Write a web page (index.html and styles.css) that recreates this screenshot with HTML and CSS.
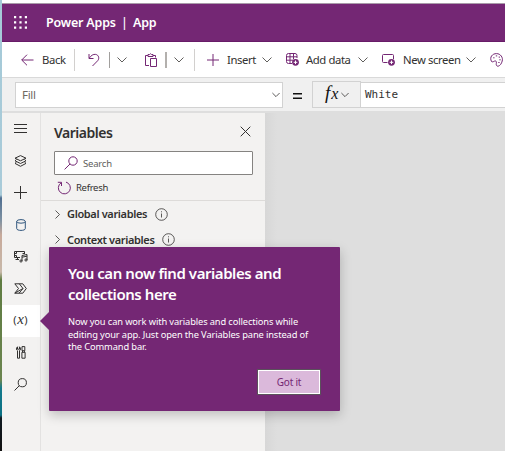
FILE: index.html
```html
<!DOCTYPE html>
<html lang="en">
<head>
<meta charset="utf-8">
<title>Power Apps | App</title>
<link rel="stylesheet" href="styles.css">
</head>
<body>
<svg class="defs" width="0" height="0">
  <symbol id="chev" viewBox="0 0 10 6"><path d="M.5 .5 5 5 9.5 .5"/></symbol>
  <symbol id="info" viewBox="0 0 13 13"><circle cx="6.5" cy="6.5" r="5.8"/><path d="M6.5 5.5v4M6.5 3.3v1"/></symbol>
</svg>
<div class="window">
  <header class="header">
    <svg class="waffle" width="13" height="13" viewBox="0 0 13 13"><path d="M0 1.2h13M0 6.4h13M0 11.6h13"/></svg>
    <span class="product">Power Apps</span><span class="bar">|</span><span class="appname">App</span>
  </header>

  <nav class="toolbar">
    <svg width="13" height="12" viewBox="0 0 13 12"><path d="M12.5 6H.8M6 .7.7 6 6 11.3"/></svg>
    <span class="t-back">Back</span>
    <i class="sep"></i>
    <svg width="12" height="14" viewBox="0 0 12 14"><path d="M1 1v4.500h4.500M1.200 5.200C3 2.500 5.200 1 7.700 1.400c3 .5 4 4 2 6.300L4.500 13"/></svg>
    <i class="sep dark"></i>
    <svg class="gray" width="10" height="6"><use href="#chev"/></svg>
    <svg width="12" height="14" viewBox="0 0 12 14"><path d="M4 12.500H.5V2.500H3M8 2.500h2.500v2M3 3.500v-2h1.500q1-1.500 2 0H8v2zM5.500 5.500h6v8h-6z"/></svg>
    <i class="sep thick"></i>
    <svg class="gray" width="10" height="6"><use href="#chev"/></svg>
    <i class="sep"></i>
    <svg width="12" height="12" viewBox="0 0 12 12"><path d="M6 0v12M0 6h12"/></svg>
    <span class="t-insert">Insert</span>
    <svg class="gray" width="10" height="6"><use href="#chev"/></svg>
    <svg width="13" height="13" viewBox="0 0 13 13"><path d="M6 10.500H2.500Q.5 10.500.5 8.500v-6Q.5.5 2.500.5h6.500q2 0 2 2V5M.5 3.800H11M.5 7.200H7M4 .5v10M7.500.5V6"/><circle class="dot" cx="9.500" cy="9.300" r="3.400"/><path class="light" d="M9.500 7.500v3.600M7.700 9.300h3.600"/></svg>
    <span class="t-data">Add data</span>
    <svg class="gray" width="10" height="6"><use href="#chev"/></svg>
    <svg width="13" height="13" viewBox="0 0 13 13"><path d="M5.500 9.500H1.500q-1 0-1-1v-6q0-1 1-1h9q1 0 1 1V6"/><circle class="dot" cx="9.500" cy="9.300" r="3.400"/><path class="light" d="M9.500 7.500v3.600M7.700 9.300h3.600"/></svg>
    <span class="t-screen">New screen</span>
    <svg class="gray" width="10" height="6"><use href="#chev"/></svg>
    <svg width="13" height="14" viewBox="0 0 13 14"><path d="M1.500 8.500C-.8 4 2.500.6 6.500.6s6.800 4 5.700 7.400c-.6 2.500-2.100 4.700-4 5.200-1.600.2-2.200-1.200-1.900-2.700.4-2-.3-3-1.800-2.400-1 .5-2.200 1.200-3 .4z"/><path d="M3.200 4.800h1.300M5.800 2.900h1.400M8.700 4.100H10M9.300 6.800h1.400M8.300 9.500h1.300"/></svg>
  </nav>

  <div class="formula">
    <div class="property"><span>Fill</span><svg class="ink" width="8" height="6"><use href="#chev"/></svg></div>
    <div class="equals"><svg width="9" height="6" viewBox="0 0 9 6"><path d="M0 .75h9M0 5.250h9"/></svg></div>
    <div class="fx"><span><b>f</b>x</span><svg class="ink" width="8" height="6"><use href="#chev"/></svg></div>
    <div class="value">White</div>
  </div>

  <main class="workspace">
    <aside class="rail">
      <div><svg width="13" height="9" viewBox="0 0 13 9"><path d="M0 .5h13M0 4.500h13M0 8.500h13"/></svg></div>
      <div><svg width="13" height="12" viewBox="0 0 13 12"><path d="M6.500.6 12 3.200 6.500 5.800 1 3.200zM2.500 4.500 1 5.800l5.500 2.700L12 5.800l-1.500-1.300M2.500 7 1 8.400l5.500 2.900L12 8.400 10.500 7"/></svg></div>
      <div><svg width="13" height="13" viewBox="0 0 13 13"><path d="M6.500 0v13M0 6.500h13"/></svg></div>
      <div><svg class="blue" width="10" height="12" viewBox="0 0 10 12"><ellipse cx="5" cy="2.400" rx="4.300" ry="1.800"/><path d="M.7 2.400v7.200c0 2.400 8.600 2.400 8.600 0V2.400"/></svg></div>
      <div><svg width="14" height="13" viewBox="0 0 14 13"><path d="M6 7.500H.5v-6h10v2.500M.5 3.500h2v-2M.5 5.500h2v2M8.500 3.500h2M3.500 9.500V7.500M1.500 9.500H5M8 11V5.500l5-1V10M8 7.200l5-1"/><circle cx="7" cy="11" r="1.100"/><circle cx="12" cy="10" r="1.100"/></svg></div>
      <div><svg width="13" height="11" viewBox="0 0 13 11"><path d="M.8.8h8L12.300 5.500 8.800 10.200h-8L4.500 5.500zM5.300.8 9 5.500.8 10.200M9 5.500 5 10.200"/></svg></div>
      <div class="active"><span class="paren">(</span><span class="var">x</span><span class="paren">)</span></div>
      <div><svg width="10" height="13" viewBox="0 0 10 13"><path d="M1.500.8C0 2 .2 4 1.500 4.700v7.500h2V4.700C4.800 4 4.900 2 3.500.8v2.400h-2zM6 .6h2.800v4.100H6zM6.500 4.700v1.600M8.400 4.700v1.600M5.900 6.300h3.200v5.900H5.900z"/></svg></div>
      <div><svg width="13" height="13" viewBox="0 0 13 13"><circle cx="8.300" cy="4.700" r="4.100"/><path d="M5.400 7.600.5 12.500"/></svg></div>
    </aside>

    <section class="panel">
      <div class="panel-head"><h2>Variables</h2><svg class="ink" width="11" height="11" viewBox="0 0 11 11"><path d="M.7.7l9.600 9.600M10.300.7.7 10.300"/></svg></div>
      <div class="search"><svg width="14" height="14" viewBox="0 0 14 14"><circle cx="9" cy="5" r="4.200"/><path d="M6 8 .6 13.400"/></svg><span>Search</span></div>
      <div class="refresh"><svg width="14" height="14" viewBox="0 0 14 14"><path d="M9 1.100A6 6 0 1 1 4 1.900M.8 1.300H4.500V5"/></svg><span>Refresh</span></div>
      <div class="group"><svg class="ink" width="5" height="9" viewBox="0 0 5 9"><path d="M.5.5l4 4-4 4"/></svg><span class="g1">Global variables</span><svg class="ink" width="13" height="13"><use href="#info"/></svg></div>
      <div class="group"><svg class="ink" width="5" height="9" viewBox="0 0 5 9"><path d="M.5.5l4 4-4 4"/></svg><span class="g2">Context variables</span><svg class="ink" width="13" height="13"><use href="#info"/></svg></div>
    </section>
    <section class="canvas"></section>
  </main>
</div>

<div class="callout">
  <h1>You can now find variables and<br>collections here</h1>
  <p>Now you can work with variables and collections while<br>editing your app. Just open the Variables pane instead of<br>the Command bar.</p>
  <button>Got it</button>
</div>
</body>
</html>
```

FILE: styles.css
```css
* { box-sizing: border-box; }
body {
  margin: 0;
  width: 505px;
  height: 451px;
  overflow: hidden;
  padding-left: 2px;
  font-family: "Noto Sans", "Open Sans", sans-serif;
  color: #323130;
  background: linear-gradient(#a5cad8 0, #a9cbd9 195px, #506f91 198px, #7e91a2 220px, #c8aa9b 235px, #c8b9aa 272px, #5f7c42 280px, #6b8550 380px, #147a8c 388px, #0b7184 415px, #101b22 418px, #111 451px);
}
svg { display: block; fill: none; stroke: #742774; stroke-width: 1; overflow: visible; flex: none; }
.defs { position: absolute; }
span { white-space: nowrap; }
.window { height: 451px; display: flex; flex-direction: column; background: #fff; }

.header {
  height: 39px;
  margin-top: 3px;
  border-top: 1px solid #a99aa9;
  border-bottom: 1px solid #681b68;
  background: #742774;
  color: #fff;
  display: flex;
  align-items: center;
  padding-left: 12px;
  font-size: 12.5px;
  font-weight: 600;
  flex: none;
}
.waffle { stroke: #fff; stroke-width: 2.2; stroke-dasharray: 2.2 3.2; margin-right: 19px; }
.product { width: 75px; letter-spacing: -.2px; }
.bar { width: 12px; font-weight: 500; }
.appname { letter-spacing: -.2px; }

.toolbar {
  height: 35px;
  flex: none;
  display: grid;
  align-items: center;
  grid-template-columns: 21px 32px 14px 21px 8px 28px 20px 9px 20px 13px 20px 35px 24px 20px 52px 24px 21px 63px 24px 14px;
  padding-left: 19px;
  font-size: 11.3px;
  letter-spacing: -.4px;
}
.sep { width: 1px; height: 22px; background: #d2d0ce; }
.sep.dark { background: #a19f9d; height: 16px; }
.sep.thick { width: 2px; background: #b3b0ad; height: 16px; }
.gray { stroke: #605e5c; }
.ink { stroke: #323130; }
.dot { fill: #742774; stroke: none; }
.light { stroke: #fff; }

.formula {
  height: 36px;
  flex: none;
  border-top: 1px solid #d9d9d9;
  border-bottom: 2px solid #dedede;
  background: #f0f0f0;
  display: flex;
  padding: 4px 0 3px 13px;
}
.property {
  width: 268px;
  height: 26px;
  border: 1px solid #d2d2d2;
  background: #fff;
  display: flex;
  align-items: center;
  justify-content: space-between;
  padding: 0 2px 0 6px;
  font-size: 11.5px;
}
.property span { color: #6f6860; margin-top: -2px; letter-spacing: -.3px; }
.equals { width: 29px; display: flex; align-items: center; justify-content: center; padding-top: 2px; }
.equals svg { stroke: #111; stroke-width: 1.5; }
.fx {
  width: 49px;
  height: 27px;
  margin-top: -1px;
  border: 1px solid #d2d2d2;
  display: flex;
  align-items: center;
  justify-content: space-between;
  padding: 0 11px 0 12px;
  font: italic 16px/20px "Liberation Serif", serif;
  color: #111;
}
.fx span { margin-top: -3px; }
.fx b { font-size: 19px; font-weight: 400; margin-right: 1px; }
.value {
  flex: 1;
  height: 26px;
  border: 1px solid #d2d2d2;
  border-left: 0;
  border-right: 0;
  background: #fff;
  padding-left: 4px;
  font: 11px/24px "DejaVu Sans Mono", monospace;
}

.workspace { flex: 1; display: flex; background: #dedede; min-height: 0; }
.rail { width: 39px; background: #f3f2f1; border-right: 1px solid #e3e2e1; }
.rail div { height: 32px; display: flex; align-items: center; justify-content: center; padding-right: 1px; }
.rail div:not(.active) { padding-bottom: 1px; }
.rail svg { stroke: #323130; }
.rail svg.blue { stroke: #31577e; }
.rail .active { background: #fff; font-size: 11px; line-height: 18px; padding-bottom: 2px; }
.rail .var { font: italic 15px/18px "Liberation Serif", serif; padding: 0 .5px 2px; }

.panel { width: 224px; background: #f3f2f1; }
.panel-head { height: 38px; padding: 0 14px 0 13px; display: flex; align-items: center; justify-content: space-between; }
.panel-head svg { margin-bottom: 1px; }
.panel-head h2 { margin: 0; font-size: 14px; font-weight: 600; letter-spacing: -.5px; }
.search {
  margin: 0 12px 0 13px;
  height: 24px;
  border: 1px solid #858381;
  border-radius: 1px;
  background: #fff;
  display: flex;
  align-items: center;
  gap: 5px;
  padding-left: 9px;
  font-size: 9.5px;
  letter-spacing: -.2px;
  color: #605e5c;
}
.refresh { height: 26px; border-bottom: 1px solid #dddbd9; display: flex; align-items: center; gap: 5px; padding-left: 16px; font-size: 9.5px; letter-spacing: -.3px; }
.group { height: 26px; display: flex; align-items: center; padding-left: 14px; font-size: 11px; font-weight: 600; letter-spacing: -.36px; }
.group + .group { height: 25px; }
.group .ink { stroke-width: .8; }
.group span { margin-top: -1px; }
.g1 { width: 88px; margin-left: 7px; }
.g2 { width: 95px; margin-left: 7px; }
.canvas { flex: 1; background: linear-gradient(90deg, #d7d7d7, #dedede 12px); }

.callout {
  position: absolute;
  left: 49px;
  top: 247px;
  width: 291px;
  height: 164px;
  padding: 16px 19px;
  background: #742774;
  color: #fff;
  border-radius: 1px;
  box-shadow: 0 4px 12px rgba(0, 0, 0, .22);
  display: flex;
  flex-direction: column;
}
.callout::before {
  content: "";
  position: absolute;
  left: -9px;
  top: 65px;
  border: solid transparent;
  border-width: 9px 9px 9px 0;
  border-right-color: #742774;
}
.callout h1 { margin: 0; font-size: 15px; line-height: 21px; font-weight: 600; letter-spacing: -.44px; white-space: nowrap; }
.callout p { margin: 11px 0 0; font-size: 9.3px; line-height: 12.700px; letter-spacing: -.12px; white-space: nowrap; }
.callout button {
  position: relative;
  align-self: flex-end;
  margin-top: auto;
  width: 64px;
  height: 26px;
  padding: 0;
  border: 1px solid #5b515b;
  box-shadow: inset 0 0 0 1px #fff;
  background: #dbb9db;
  color: #742774;
  font: 10px "Noto Sans", sans-serif;
  letter-spacing: -.2px;
}
```
